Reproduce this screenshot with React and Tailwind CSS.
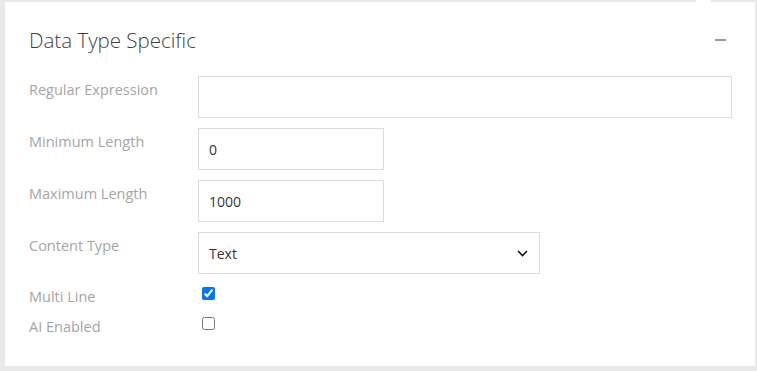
import { useState } from "react";

const FIELD_ROWS = [
  { label: "Regular Expression", value: "", width: "w-[535px]" },
  { label: "Minimum Length", value: "0", width: "w-[186px]" },
  { label: "Maximum Length", value: "1000", width: "w-[186px]" },
];

function Label({ children, className = "" }) {
  return <div className={`w-[169px] shrink-0 text-[14.5px] leading-[20px] text-[#a5a5a5] ${className}`}>{children}</div>;
}

export default function App() {
  const [values, setValues] = useState(FIELD_ROWS.map((r) => r.value));
  const [multiLine, setMultiLine] = useState(true);
  const [aiEnabled, setAiEnabled] = useState(false);

  return (
    <div className="min-h-screen bg-[#e9e9e9] pl-[5px] pt-[2px] pr-[2px] pb-[5px] font-['Open_Sans',sans-serif]">
      <div className="relative bg-white pl-[24px] pr-[23px] pt-[24px] pb-[22px]">
        <span className="absolute -top-[2px] left-[691px] h-[2px] w-[15px] bg-white" />

        <div className="flex h-[28px] items-center justify-between">
          <h2 className="text-[20.5px] font-light leading-[28px] text-[#3f3f3f]">Data Type Specific</h2>
          <button className="mr-[6px] flex h-[12px] w-[11px] items-center" title="Collapse">
            <span className="block h-[2px] w-[11px] bg-[#9a9a9a]" />
          </button>
        </div>

        <div className="mt-[22px] flex flex-col gap-[10px]">
          {FIELD_ROWS.map((r, i) => (
            <div key={r.label} className="flex">
              <Label className="pt-[4px]">{r.label}</Label>
              <input
                value={values[i]}
                onChange={(e) => setValues(values.map((v, j) => (j === i ? e.target.value : v)))}
                className={`h-[42px] ${r.width} border border-[#dcdcdc] px-[10px] text-[14px] text-[#333] outline-none`}
              />
            </div>
          ))}

          <div className="flex">
            <Label className="pt-[4px]">Content Type</Label>
            <div className="flex h-[42px] w-[342px] items-center justify-between border border-[#dcdcdc] pl-[10px] pr-[11px] text-[14px] text-[#333]">
              <span>Text</span>
              <svg width="11" height="7" viewBox="0 0 11 7" fill="none">
                <path d="M1 1l4.5 4.5L10 1" stroke="#111" strokeWidth="1.6" />
              </svg>
            </div>
          </div>

          <div className="flex flex-col">
            <label className="flex h-[30px]">
              <Label className="pt-[3px]">Multi Line</Label>
              <input type="checkbox" checked={multiLine} onChange={(e) => setMultiLine(e.target.checked)} className="ml-[4px] mt-[3px] self-start" />
            </label>
            <label className="flex h-[30px]">
              <Label className="pt-[3px]">AI Enabled</Label>
              <input type="checkbox" checked={aiEnabled} onChange={(e) => setAiEnabled(e.target.checked)} className="ml-[4px] mt-[3px] self-start" />
            </label>
          </div>
        </div>
      </div>
    </div>
  );
}
